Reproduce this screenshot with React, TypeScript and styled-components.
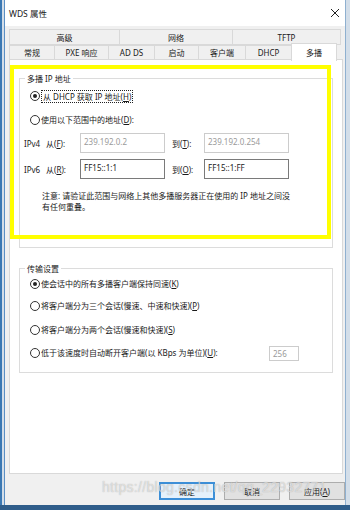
import React from 'react';
import styled, { createGlobalStyle } from 'styled-components';

const Global = createGlobalStyle`
    html, body {
        margin: 0;
        padding: 0;
        background: #2f5d8a;
        font-family: "Noto Sans", "Noto Sans CJK SC", sans-serif;
        color: #1a1a1a;
    }
`;

const row1Tabs = [
    { name: '高级', w: 111 },
    { name: '网络', w: 114 },
    { name: 'TFTP', w: 109 },
];

const row2Tabs = [
    { name: '常规', w: 46 },
    { name: 'PXE 响应', w: 55 },
    { name: 'AD DS', w: 47 },
    { name: '启动', w: 45 },
    { name: '客户端', w: 48 },
    { name: 'DHCP', w: 47 },
    { name: '多播', w: 46, active: true },
];

const transferOptions = [
    { pre: '使会话中的所有多播客户端保持同速(', key: 'K', post: ')', checked: true, mt: 4 },
    { pre: '将客户端分为三个会话(慢速、中速和快速)(', key: 'P', post: ')', mt: 10 },
    { pre: '将客户端分为两个会话(慢速和快速)(', key: 'S', post: ')', mt: 12 },
    { pre: '低于该速度时自动断开客户端(以 KBps 为单位)(', key: 'U', post: '):', input: '256', mt: 11 },
];

const App = () => {
    return (
        <>
            <Global />
            <Desktop>
                <Window>
                    <TitleBar>
                        <span>WDS 属性</span>
                        <Close>
                            <svg width="10" height="10" viewBox="0 0 10 10">
                                <path d="M1 1 L9 9 M9 1 L1 9" stroke="#222" strokeWidth="1" />
                            </svg>
                        </Close>
                    </TitleBar>
                    <Tabs>
                        <TabRow>
                            {row1Tabs.map((t, i) => (
                                <Tab key={i} w={t.w}>{t.name}</Tab>
                            ))}
                        </TabRow>
                        <TabRow>
                            {row2Tabs.map((t, i) => (
                                <Tab key={i} w={t.w} active={t.active}>{t.name}</Tab>
                            ))}
                        </TabRow>
                    </Tabs>
                    <Panel>
                        <Highlight />
                        <Group top={18} height={170}>
                            <Legend>多播 IP 地址</Legend>
                            <RadioRow mt={6}>
                                <Radio checked />
                                <Focus>从 DHCP 获取 IP 地址(<u>H</u>)</Focus>
                            </RadioRow>
                            <RadioRow mt={12}>
                                <Radio />
                                <span>使用以下范围中的地址(<u>D</u>):</span>
                            </RadioRow>
                            <FieldRow mt={7}>
                                <Proto>IPv4</Proto>
                                <FieldLabel w={34}>从(<u>F</u>):</FieldLabel>
                                <TextBox disabled>239.192.0.2</TextBox>
                                <FieldLabel w={32} ml={7}>到(<u>T</u>):</FieldLabel>
                                <TextBox disabled>239.192.0.254</TextBox>
                            </FieldRow>
                            <FieldRow mt={6}>
                                <Proto>IPv6</Proto>
                                <FieldLabel w={34}>从(<u>R</u>):</FieldLabel>
                                <TextBox>FF15::1:1</TextBox>
                                <FieldLabel w={32} ml={7}>到(<u>O</u>):</FieldLabel>
                                <TextBox>FF15::1:FF</TextBox>
                            </FieldRow>
                            <Note>
                                注意: 请验证此范围与网络上其他多播服务器正在使用的 IP 地址之间没有任何重叠。
                            </Note>
                        </Group>
                        <Group top={20} height={105}>
                            <Legend>传输设置</Legend>
                            {transferOptions.map((o, i) => (
                                <RadioRow key={i} mt={o.mt}>
                                    <Radio checked={o.checked} />
                                    <span>{o.pre}<u>{o.key}</u>{o.post}</span>
                                    {o.input && <SmallBox>{o.input}</SmallBox>}
                                </RadioRow>
                            ))}
                        </Group>
                    </Panel>
                    <Buttons>
                        <Button primary>确定</Button>
                        <Button>取消</Button>
                        <Button>应用(<u>A</u>)</Button>
                        <Watermark>https://blog.csdn.net/qq_22932771</Watermark>
                    </Buttons>
                </Window>
            </Desktop>
        </>
    );
};

export default App;

const Desktop = styled.div`
    display: flex;
    height: 505px;
    width: 350px;
    padding-left: 2px;
    box-sizing: border-box;
    background: #d3dee9;
    border-left: 2px solid #3b78b3;
`;

const Window = styled.div`
    position: relative;
    width: 342px;
    height: 505px;
    box-sizing: border-box;
    background: #f0f0f0;
    border-left: 1px solid #5b8fc4;
    border-right: 1px solid #8fb0d0;
    display: flex;
    flex-direction: column;
`;

const TitleBar = styled.div`
    height: 26px;
    background: #ffffff;
    display: flex;
    align-items: center;
    justify-content: space-between;
    padding: 0 4px 0 4px;
    font-size: 8.5px;
`;

const Close = styled.div`
    width: 12px;
    height: 12px;
    display: flex;
    align-items: center;
    justify-content: center;
`;

const Tabs = styled.div`
    margin: 3px 0 0 4px;
    display: flex;
    flex-direction: column;
`;

const TabRow = styled.div`
    display: flex;
    height: 15px;
    &:first-child {
        height: 16px;
    }
`;

const Tab = styled.div<{ w: number; active?: boolean }>`
    width: ${p => p.w}px;
    box-sizing: border-box;
    display: flex;
    align-items: center;
    justify-content: center;
    font-size: 8px;
    background: ${p => (p.active ? '#ffffff' : '#f0f0f0')};
    border: 1px solid #d9d9d9;
    border-bottom: ${p => (p.active ? 'none' : '1px solid #d9d9d9')};
    margin-left: -1px;
    position: relative;
    z-index: ${p => (p.active ? 2 : 1)};
    ${p => p.active && 'margin-top: -2px; height: 18px;'}
    &:first-child {
        margin-left: 0;
    }
`;

const Panel = styled.div`
    position: relative;
    margin: -1px 0 0 4px;
    width: 334px;
    height: 415px;
    box-sizing: border-box;
    background: #ffffff;
    border: 1px solid #d9d9d9;
    padding: 0 9px;
    overflow: hidden;
`;

const Highlight = styled.div`
    position: absolute;
    left: 0;
    top: 5px;
    width: 321px;
    height: 174px;
    box-sizing: border-box;
    border: 4px solid #ffff00;
    pointer-events: none;
    z-index: 3;
`;

const Group = styled.div<{ top: number; height: number }>`
    position: relative;
    margin-top: ${p => p.top}px;
    height: ${p => p.height}px;
    box-sizing: border-box;
    border: 1px solid #dcdcdc;
    padding: 0 8px 0 10px;
    font-size: 8px;
`;

const Legend = styled.div`
    width: fit-content;
    margin: -6px 0 0 -5px;
    padding: 0 2px;
    background: #ffffff;
    height: 11px;
    line-height: 11px;
`;

const RadioRow = styled.div<{ mt: number }>`
    display: flex;
    align-items: center;
    height: 12px;
    line-height: 12px;
    margin-top: ${p => p.mt}px;
    white-space: nowrap;
`;

const Radio = styled.span<{ checked?: boolean }>`
    width: 8px;
    height: 8px;
    border: 1px solid #333;
    border-radius: 50%;
    margin-right: 1px;
    display: flex;
    align-items: center;
    justify-content: center;
    flex-shrink: 0;
    &::after {
        content: '';
        width: 4px;
        height: 4px;
        border-radius: 50%;
        background: ${p => (p.checked ? '#222' : 'transparent')};
    }
`;

const Focus = styled.span`
    border: 1px dotted #222;
    padding: 0 1px;
    line-height: 11px;
`;

const FieldRow = styled.div<{ mt: number }>`
    display: flex;
    align-items: center;
    margin: ${p => p.mt}px 0 0 -6px;
    height: 20px;
`;

const Proto = styled.span`
    width: 22px;
`;

const FieldLabel = styled.span<{ w: number; ml?: number }>`
    width: ${p => p.w}px;
    margin-left: ${p => p.ml || 0}px;
`;

const TextBox = styled.div<{ disabled?: boolean }>`
    width: 85px;
    height: 20px;
    box-sizing: border-box;
    border: 1px solid ${p => (p.disabled ? '#cccccc' : '#7a7a7a')};
    color: ${p => (p.disabled ? '#9a9a9a' : '#1a1a1a')};
    padding: 2px 3px;
    font-size: 8px;
    line-height: 12px;
`;

const Note = styled.div`
    margin: 12px 30px 0 12px;
    line-height: 10.5px;
`;

const SmallBox = styled.div`
    margin-left: auto;
    margin-right: 25px;
    width: 30px;
    height: 15px;
    box-sizing: border-box;
    border: 1px solid #cccccc;
    color: #9a9a9a;
    padding: 1px 3px;
    line-height: 11px;
`;

const Buttons = styled.div`
    position: relative;
    display: flex;
    justify-content: flex-end;
    gap: 9px;
    padding: 8px 0 0 0;
`;

const Button = styled.div<{ primary?: boolean }>`
    width: 56px;
    height: 18px;
    box-sizing: border-box;
    display: flex;
    align-items: center;
    justify-content: center;
    font-size: 8px;
    background: ${p => (p.primary ? '#e5f1fb' : '#e1e1e1')};
    border: ${p => (p.primary ? '2px solid #3c8fd8' : '1px solid #adadad')};
`;

const Watermark = styled.div`
    position: absolute;
    left: 97px;
    top: 5px;
    font-family: "Liberation Sans", sans-serif;
    font-size: 14px;
    letter-spacing: 0.3px;
    color: rgba(255, 255, 255, 0.55);
    text-shadow: 0 0 1px rgba(120, 120, 120, 0.6);
    pointer-events: none;
    white-space: nowrap;
`;
